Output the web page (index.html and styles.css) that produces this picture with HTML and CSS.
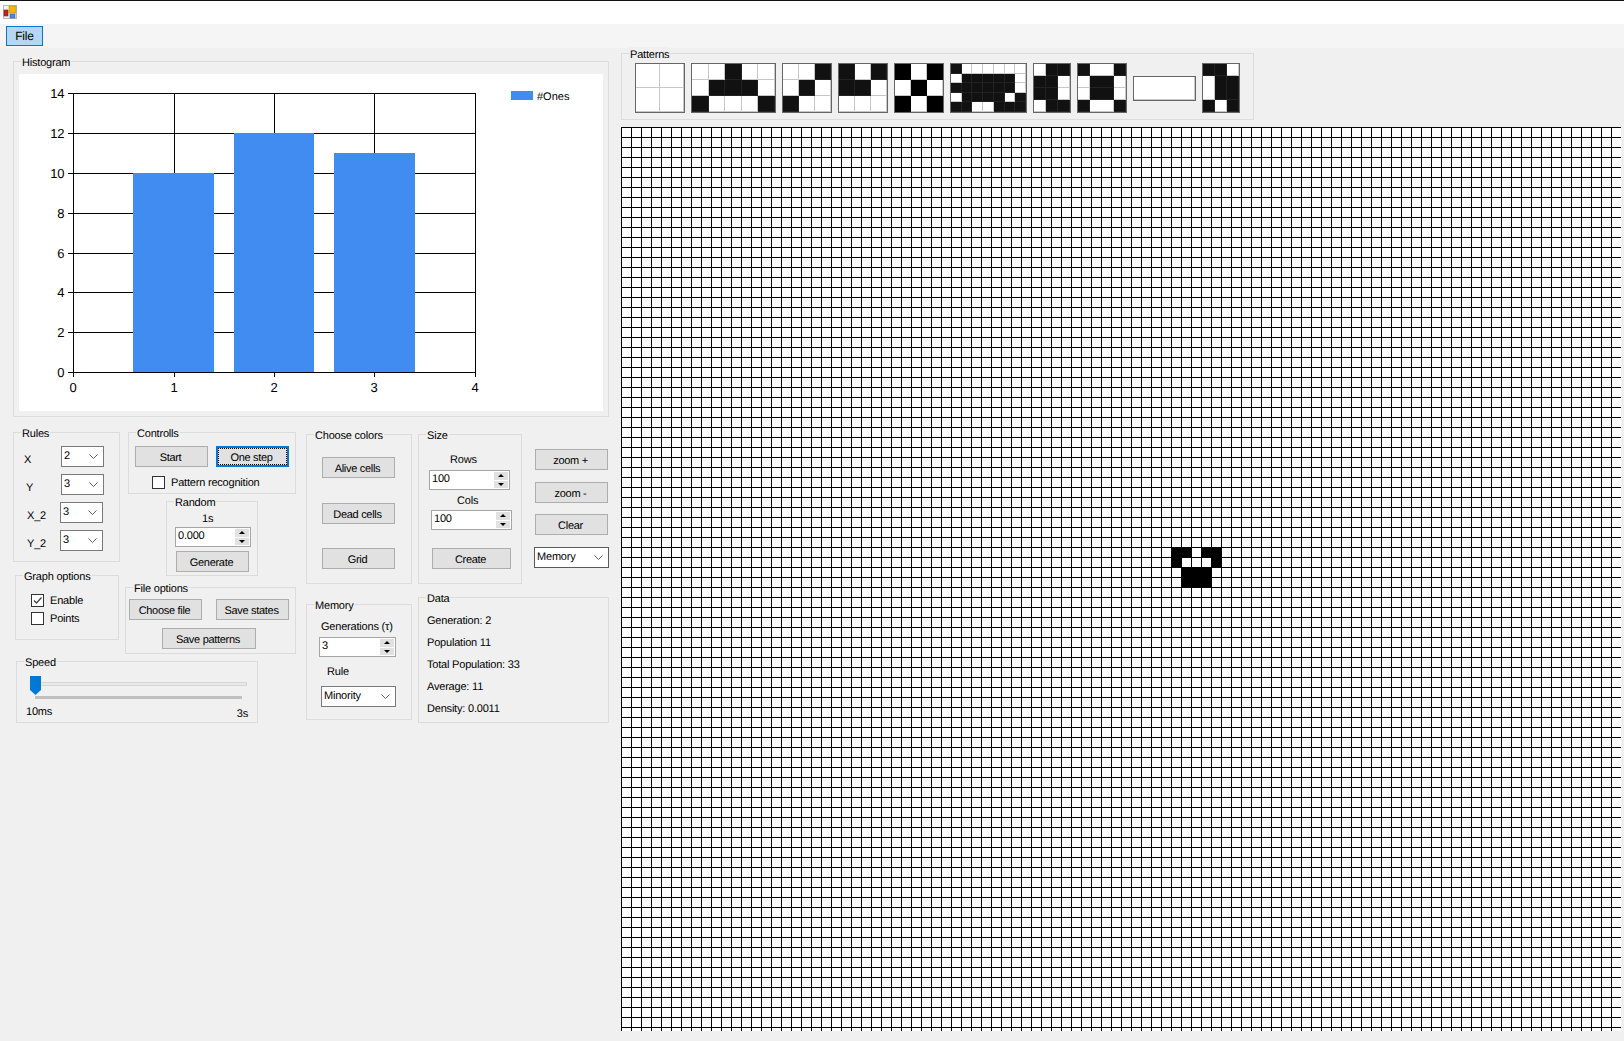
FILE: index.html
```html
<!DOCTYPE html>
<html>

<head>
  <title>Cellular Automata</title>
  <link rel="stylesheet" href="styles.css">
</head>

<body>
  <!-- Window title bar, only the icon shows -->
  <div class="titlebar">
    <svg class="app-icon" width="14" height="14" viewBox="0 0 14 14">
      <rect x="0" y="0" width="14" height="14" fill="#bbb" />
      <rect x="1" y="1" width="12" height="12" fill="#f4f4f4" />
      <rect x="6" y="1" width="7" height="7" fill="#f2b705" stroke="#c88a10" stroke-width="0.6" />
      <rect x="1" y="5" width="4" height="6" fill="#c0231c" stroke="#8a1a14" stroke-width="0.6" />
      <rect x="7" y="9" width="5" height="4" fill="#4f86d8" stroke="#3465ac" stroke-width="0.6" />
    </svg>
  </div>

  <!-- Menu strip -->
  <div class="menubar">
    <div class="menu-file">File</div>
  </div>

  <div class="main">
    <!-- Left side with the histogram and all the controls -->
    <div class="left">
      <div class="group histogram">
        <div class="group-title">Histogram</div>
        <svg class="chart" width="584" height="337" viewBox="19 74 584 337">
          <g class="chart-lines">
            <path d="M73 93.5H475M73 133.5H475M73 173.5H475M73 213.5H475M73 253.5H475M73 292.5H475M73 332.5H475M73 372.5H475" />
            <path d="M73.5 93V373M174.5 93V373M274.5 93V373M374.5 93V373M475.5 93V373" />
            <path d="M68 93.5H73M68 133.5H73M68 173.5H73M68 213.5H73M68 253.5H73M68 292.5H73M68 332.5H73M68 372.5H73" />
            <path d="M73.5 372V377M174.5 372V377M274.5 372V377M374.5 372V377M475.5 372V377" />
          </g>
          <g class="chart-bars">
            <rect x="133" y="173" width="81" height="199" />
            <rect x="234" y="133" width="80" height="239" />
            <rect x="334" y="153" width="81" height="219" />
            <rect x="511" y="91" width="22" height="9" />
          </g>
          <g class="chart-y">
            <text x="64" y="98">14</text>
            <text x="64" y="138">12</text>
            <text x="64" y="178">10</text>
            <text x="64" y="218">8</text>
            <text x="64" y="258">6</text>
            <text x="64" y="297">4</text>
            <text x="64" y="337">2</text>
            <text x="64" y="377">0</text>
          </g>
          <g class="chart-x">
            <text x="73" y="392">0</text>
            <text x="174" y="392">1</text>
            <text x="274" y="392">2</text>
            <text x="374" y="392">3</text>
            <text x="475" y="392">4</text>
          </g>
          <text class="chart-legend" x="537" y="100">#Ones</text>
        </svg>
      </div>

      <div class="tools">
        <div class="tools-a">
          <div class="tools-top">
            <div class="col-rules">
              <!-- Rules -->
              <div class="group rules">
                <div class="group-title">Rules</div>
                <div class="rule-rows">
                  <div class="rule-row">
                    <span class="rule-label lab-x">X</span>
                    <div class="combo combo-rule"><span>2</span><svg width="9" height="5" viewBox="0 0 9 5"><path d="M0.5 0.5L4.5 4.5L8.5 0.5" /></svg></div>
                  </div>
                  <div class="rule-row">
                    <span class="rule-label lab-y">Y</span>
                    <div class="combo combo-rule"><span>3</span><svg width="9" height="5" viewBox="0 0 9 5"><path d="M0.5 0.5L4.5 4.5L8.5 0.5" /></svg></div>
                  </div>
                  <div class="rule-row">
                    <span class="rule-label lab-x2">X_2</span>
                    <div class="combo combo-rule combo-shift"><span>3</span><svg width="9" height="5" viewBox="0 0 9 5"><path d="M0.5 0.5L4.5 4.5L8.5 0.5" /></svg></div>
                  </div>
                  <div class="rule-row">
                    <span class="rule-label lab-x2">Y_2</span>
                    <div class="combo combo-rule combo-shift"><span>3</span><svg width="9" height="5" viewBox="0 0 9 5"><path d="M0.5 0.5L4.5 4.5L8.5 0.5" /></svg></div>
                  </div>
                </div>
              </div>

              <!-- Graph options -->
              <div class="group graph-options">
                <div class="group-title">Graph options</div>
                <label class="check check-enable">
                  <span class="box"><svg width="11" height="11" viewBox="0 0 11 11"><path d="M2 5.5L4.5 8L9.5 2.5" /></svg></span>Enable
                </label>
                <label class="check check-points"><span class="box"></span>Points</label>
              </div>
            </div>

            <div class="col-controls">
              <!-- Start and step -->
              <div class="group controlls">
                <div class="group-title">Controlls</div>
                <div class="btn-row controlls-row">
                  <div class="btn">Start</div>
                  <div class="btn btn-focus">One step</div>
                </div>
                <label class="check check-pattern"><span class="box"></span>Pattern recognition</label>
              </div>

              <!-- Random -->
              <div class="group random">
                <div class="group-title">Random</div>
                <div class="random-time">1s</div>
                <div class="numeric numeric-random"><span>0.000</span>
                  <div class="spin"><i class="up"></i><i class="down"></i></div>
                </div>
                <div class="btn btn-generate">Generate</div>
              </div>

              <!-- File options -->
              <div class="group file-options">
                <div class="group-title">File options</div>
                <div class="btn-row file-row">
                  <div class="btn">Choose file</div>
                  <div class="btn">Save states</div>
                </div>
                <div class="btn btn-patterns">Save patterns</div>
              </div>
            </div>
          </div>

          <!-- Speed slider -->
          <div class="group speed">
            <div class="group-title">Speed</div>
            <div class="slider">
              <div class="slider-track"></div>
              <svg class="slider-thumb" width="11" height="19" viewBox="0 0 11 19"><path d="M0 0H11V14L5.5 19L0 14Z" /></svg>
            </div>
            <div class="slider-ticks"></div>
            <div class="slider-labels">
              <span>10ms</span>
              <span class="slider-max">3s</span>
            </div>
          </div>
        </div>

        <div class="tools-b">
          <!-- Choose colors -->
          <div class="group colors">
            <div class="group-title">Choose colors</div>
            <div class="btn btn-alive">Alive cells</div>
            <div class="btn btn-dead">Dead cells</div>
            <div class="btn btn-grid">Grid</div>
          </div>

          <!-- Memory -->
          <div class="group memory">
            <div class="group-title">Memory</div>
            <div class="memory-gen">Generations (τ)</div>
            <div class="numeric numeric-gen"><span>3</span>
              <div class="spin"><i class="up"></i><i class="down"></i></div>
            </div>
            <div class="memory-rule">Rule</div>
            <div class="combo combo-minority"><span>Minority</span><svg width="9" height="5" viewBox="0 0 9 5"><path d="M0.5 0.5L4.5 4.5L8.5 0.5" /></svg></div>
          </div>
        </div>

        <div class="tools-c">
          <div class="size-row">
            <!-- Size -->
            <div class="group size">
              <div class="group-title">Size</div>
              <div class="size-rows">Rows</div>
              <div class="numeric numeric-rows"><span>100</span>
                <div class="spin"><i class="up"></i><i class="down"></i></div>
              </div>
              <div class="size-cols">Cols</div>
              <div class="numeric numeric-cols"><span>100</span>
                <div class="spin"><i class="up"></i><i class="down"></i></div>
              </div>
              <div class="btn btn-create">Create</div>
            </div>

            <!-- Zoom buttons -->
            <div class="zoom-col">
              <div class="btn">zoom +</div>
              <div class="btn btn-zoom-out">zoom -</div>
              <div class="btn btn-clear">Clear</div>
              <div class="combo combo-memory"><span>Memory</span><svg width="9" height="5" viewBox="0 0 9 5"><path d="M0.5 0.5L4.5 4.5L8.5 0.5" /></svg></div>
            </div>
          </div>

          <!-- Data -->
          <div class="group data">
            <div class="group-title">Data</div>
            <div class="data-lines">
              <div>Generation: 2</div>
              <div>Population 11</div>
              <div>Total Population: 33</div>
              <div>Average: 11</div>
              <div>Density: 0.0011</div>
            </div>
          </div>
        </div>
      </div>
    </div>

    <!-- Right side with the patterns and the board -->
    <div class="right">
      <div class="group patterns">
        <div class="group-title">Patterns</div>
        <div class="pattern-row">
          <div class="pat pat-a"><i></i><i></i><i></i><i></i></div>
          <div class="pat pat-b">
            <i></i><i></i><i class="on"></i><i></i><i></i>
            <i></i><i class="on"></i><i class="on"></i><i class="on"></i><i></i>
            <i class="on"></i><i></i><i></i><i></i><i class="on"></i>
          </div>
          <div class="pat pat-c">
            <i></i><i></i><i class="on"></i>
            <i></i><i class="on"></i><i></i>
            <i class="on"></i><i></i><i></i>
          </div>
          <div class="pat pat-c">
            <i class="on"></i><i></i><i class="on"></i>
            <i class="on"></i><i class="on"></i><i></i>
            <i></i><i></i><i></i>
          </div>
          <div class="pat pat-c pat-solid">
            <i class="on"></i><i></i><i class="on"></i>
            <i></i><i class="on"></i><i></i>
            <i class="on"></i><i></i><i class="on"></i>
          </div>
          <div class="pat pat-d">
            <i class="on"></i><i></i><i></i><i></i><i></i><i></i><i></i>
            <i></i><i class="on"></i><i class="on"></i><i class="on"></i><i class="on"></i><i class="on"></i><i></i>
            <i class="on"></i><i class="on"></i><i class="on"></i><i class="on"></i><i class="on"></i><i class="on"></i><i></i>
            <i></i><i class="on"></i><i class="on"></i><i class="on"></i><i class="on"></i><i></i><i class="on"></i>
            <i class="on"></i><i class="on"></i><i></i><i></i><i class="on"></i><i class="on"></i><i class="on"></i>
          </div>
          <div class="pat pat-e">
            <i></i><i class="on"></i><i class="on"></i>
            <i class="on"></i><i class="on"></i><i></i>
            <i class="on"></i><i class="on"></i><i></i>
            <i></i><i class="on"></i><i class="on"></i>
          </div>
          <div class="pat pat-f">
            <i class="on"></i><i></i><i class="on"></i>
            <i></i><i class="on"></i><i></i>
            <i></i><i class="on"></i><i></i>
            <i class="on"></i><i></i><i class="on"></i>
          </div>
          <div class="pat pat-g"><i></i></div>
          <div class="pat pat-h">
            <i class="on"></i><i class="on"></i><i></i>
            <i></i><i class="on"></i><i class="on"></i>
            <i class="on"></i><i></i><i class="on"></i>
          </div>
        </div>
      </div>

      <!-- Board: 10px cells -->
      <svg class="board" width="1000" height="904" viewBox="0 0 1000 904">
        <defs>
          <pattern id="cell" width="10" height="10" patternUnits="userSpaceOnUse">
            <rect width="10" height="10" fill="#fff" />
            <rect width="10" height="1" fill="#000" />
            <rect width="1" height="10" fill="#000" />
          </pattern>
        </defs>
        <rect width="1000" height="904" fill="url(#cell)" />
        <rect x="550" y="420" width="21" height="11" />
        <rect x="580" y="420" width="21" height="11" />
        <rect x="550" y="430" width="11" height="11" />
        <rect x="590" y="430" width="11" height="11" />
        <rect x="560" y="440" width="31" height="21" />
      </svg>
    </div>
  </div>
</body>

</html>
```

FILE: styles.css
```css
/* Reset and window background */
* {
  box-sizing: border-box;
}

body {
  margin: 0;
  height: 1041px;
  overflow: hidden;
  background: #f0f0f0;
  color: #000;
  font-family: "Liberation Sans", Arial, sans-serif;
  font-size: 11px;
  line-height: 13px;
  letter-spacing: -0.2px;
  text-rendering: geometricPrecision;
}

/* Title bar and menu */
.titlebar {
  height: 24px;
  background: #fff;
  border-top: 1px solid #111;
  padding: 4px 0 0 3px;
}

.app-icon {
  display: block;
}

.menubar {
  height: 24px;
  background: #f5f5f5;
  padding: 2px 0 0 6px;
}

.menu-file {
  width: 37px;
  height: 20px;
  background: #b5d7f3;
  border: 1px solid #0078d7;
  font-size: 12px;
  line-height: 19px;
  text-align: center;
}

.main {
  display: flex;
}

.left {
  width: 621px;
  padding-left: 13px;
}

.right {
  flex: 1;
}

/* Group box with its title sitting on the border */
.group {
  border: 1px solid #dcdcdc;
}

.group-title {
  width: fit-content;
  height: 13px;
  margin: -7px 0 0 7px;
  padding: 0 1px;
  background: #f0f0f0;
  line-height: 17px;
}

/* Histogram */
.histogram {
  width: 596px;
  height: 356px;
  margin-top: 13px;
}

.chart {
  display: block;
  margin: 6px 0 0 5px;
  background: #fff;
}

.chart-lines path {
  fill: none;
  stroke: #000;
  stroke-width: 1;
  shape-rendering: crispEdges;
}

.chart-bars rect {
  fill: #418cf0;
}

.chart text {
  font-size: 13px;
  letter-spacing: -0.4px;
}

.chart-y text {
  text-anchor: end;
}

.chart-x text {
  text-anchor: middle;
}

.chart .chart-legend {
  font-size: 11px;
  letter-spacing: 0;
}

/* Lower tools */
.tools {
  display: flex;
  margin-top: 15px;
}

.tools-a {
  width: 283px;
}

.tools-b {
  width: 106px;
  margin-left: 10px;
}

.tools-c {
  width: 191px;
  margin-left: 6px;
}

.tools-top {
  display: flex;
}

.col-rules {
  width: 112px;
}

.col-controls {
  width: 171px;
}

/* Buttons */
.btn {
  width: 73px;
  height: 21px;
  background: #e1e1e1;
  border: 1px solid #adadad;
  padding-right: 2px;
  line-height: 22px;
  letter-spacing: -0.3px;
  text-align: center;
}

.btn-focus {
  border: 2px solid #0078d7;
  outline: 1px dotted #000;
  outline-offset: -3px;
  line-height: 20px;
}

.btn-row {
  display: flex;
}

/* Combo boxes */
.combo {
  display: flex;
  align-items: center;
  justify-content: space-between;
  height: 21px;
  background: #fff;
  border: 1px solid #7a7a7a;
  padding: 0 5px 0 2px;
}

.combo svg {
  fill: none;
  stroke: #606060;
}

/* Numeric up down */
.numeric {
  display: flex;
  align-items: center;
  justify-content: space-between;
  height: 20px;
  background: #fff;
  border: 1px solid #a5a5a5;
  padding: 0 1px 2px 2px;
}

.spin {
  display: flex;
  flex-direction: column;
  gap: 1px;
  width: 14px;
  height: 16px;
  margin-top: 2px;
}

.spin i {
  display: flex;
  align-items: center;
  justify-content: center;
  height: 7px;
  background: #e1e1e1;
  flex: 1;
}

.spin i::before {
  content: "";
  border-left: 3px solid transparent;
  border-right: 3px solid transparent;
}

.spin .up::before {
  border-bottom: 3px solid #000;
}

.spin .down::before {
  border-top: 3px solid #000;
}

/* Check boxes */
.check {
  display: flex;
  align-items: flex-start;
  gap: 6px;
  height: 13px;
  line-height: 15px;
}

.box {
  width: 13px;
  height: 13px;
  background: #fff;
  border: 1px solid #333;
}

.box svg {
  display: block;
  fill: none;
  stroke: #444;
  stroke-width: 1.3;
}

/* Rules */
.rules {
  width: 107px;
  height: 130px;
}

.rule-rows {
  display: flex;
  flex-direction: column;
  gap: 7px;
  margin-top: 7px;
}

.rule-row {
  display: flex;
  align-items: center;
}

.rule-label {
  padding-top: 7px;
}

.lab-x {
  margin-left: 10px;
}

.lab-y {
  margin-left: 12px;
}

.lab-x2 {
  margin-left: 13px;
}

.combo-rule {
  width: 43px;
  margin-left: auto;
  margin-right: 15px;
}

.combo-shift {
  margin-right: 16px;
}

/* Graph options */
.graph-options {
  width: 104px;
  height: 65px;
  margin: 13px 0 0 2px;
}

.check-enable {
  margin: 12px 0 0 15px;
}

.check-points {
  margin: 5px 0 0 15px;
}

/* Controlls */
.controlls {
  width: 168px;
  height: 62px;
  margin-left: 3px;
}

.controlls-row {
  gap: 8px;
  margin: 7px 0 0 6px;
}

.check-pattern {
  margin: 9px 0 0 23px;
}

/* Random */
.random {
  width: 92px;
  height: 75px;
  margin: 7px 0 0 41px;
}

.random-time {
  margin: 5px 0 0 35px;
}

.numeric-random {
  width: 76px;
  margin: 1px 0 0 8px;
}

.btn-generate {
  margin: 4px 0 0 9px;
}

/* File options */
.file-options {
  width: 171px;
  height: 67px;
  margin-top: 11px;
}

.file-row {
  gap: 14px;
  margin: 5px 0 0 3px;
}

.btn-patterns {
  width: 94px;
  margin: 8px 0 0 36px;
}

/* Speed */
.speed {
  width: 242px;
  height: 62px;
  margin: 7px 0 0 3px;
}

.slider {
  display: flow-root;
  position: relative;
  height: 19px;
  margin: 8px 0 0 13px;
}

.slider-track {
  width: 212px;
  height: 4px;
  margin: 6px 0 0 5px;
  background: #e7eaea;
  border: 1px solid #d6d6d6;
}

/* thumb lies over the track */
.slider-thumb {
  position: absolute;
  top: 0;
  left: 0;
  fill: #0078d7;
}

.slider-ticks {
  width: 207px;
  height: 3px;
  margin: 1px 0 0 18px;
  background: #c0c0c0;
}

.slider-labels {
  display: flex;
  justify-content: space-between;
  width: 222px;
  margin: 7px 0 0 9px;
}

.slider-max {
  padding-top: 2px;
}

/* Choose colors */
.colors {
  height: 150px;
  margin-top: 2px;
}

.colors .btn {
  margin-left: 15px;
}

.btn-alive {
  margin-top: 16px;
}

.btn-dead {
  margin-top: 25px;
}

.btn-grid {
  margin-top: 24px;
}

/* Memory */
.memory {
  height: 116px;
  margin-top: 20px;
}

.memory-gen {
  margin: 10px 0 0 14px;
}

.numeric-gen {
  width: 77px;
  margin: 3px 0 0 12px;
}

.memory-rule {
  margin: 9px 0 0 20px;
}

.combo-minority {
  width: 75px;
  margin: 7px 0 0 14px;
}

/* Size */
.size-row {
  display: flex;
  margin-top: 2px;
}

.size {
  width: 104px;
  height: 150px;
}

.size-rows {
  margin: 13px 0 0 31px;
}

.numeric-rows {
  width: 81px;
  margin: 3px 0 0 10px;
}

.size-cols {
  margin: 5px 0 0 38px;
}

.numeric-cols {
  width: 81px;
  margin: 2px 0 0 12px;
}

.btn-create {
  width: 79px;
  margin: 18px 0 0 13px;
}

/* Zoom column */
.zoom-col {
  margin: 15px 0 0 12px;
}

.zoom-col .btn {
  margin-left: 1px;
}

.btn-zoom-out {
  margin-top: 12px;
}

.btn-clear {
  margin-top: 11px;
}

.combo-memory {
  width: 75px;
  margin-top: 12px;
  border-color: #5a5a5a;
}

/* Data */
.data {
  height: 126px;
  margin-top: 13px;
}

.data-lines {
  display: flex;
  flex-direction: column;
  gap: 9px;
  margin: 11px 0 0 8px;
}

/* Patterns */
.patterns {
  width: 633px;
  height: 67px;
  margin-top: 5px;
}

.pattern-row {
  display: flex;
  align-items: center;
  gap: 6px;
  margin: 3px 0 0 13px;
}

.pat {
  display: grid;
  height: 50px;
  background: #fff;
  border: 1px solid #666;
}

.pat i {
  border-right: 1px solid #c8c8c8;
  border-bottom: 1px solid #c8c8c8;
}

.pat .on {
  background: #111;
  border-color: #222;
}

.pat-solid .on {
  background: #000;
  border-color: #000;
}

.pat-a {
  width: 50px;
  grid-template: repeat(2, 1fr) / repeat(2, 1fr);
}

.pat-b {
  width: 85px;
  grid-template: repeat(3, 1fr) / repeat(5, 1fr);
}

.pat-c {
  width: 50px;
  grid-template: repeat(3, 1fr) / repeat(3, 1fr);
}

.pat-d {
  width: 77px;
  grid-template: repeat(5, 1fr) / repeat(7, 1fr);
}

.pat-e {
  width: 38px;
  grid-template: repeat(4, 1fr) / repeat(3, 1fr);
}

.pat-f {
  width: 50px;
  grid-template: repeat(4, 1fr) / 1fr 2fr 1fr;
}

.pat-g {
  width: 63px;
  height: 25px;
  grid-template: 1fr / 1fr;
}

.pat-h {
  width: 38px;
  grid-template: 1fr 2fr 1fr / repeat(3, 1fr);
}

/* Board */
.board {
  display: block;
  margin-top: 7px;
}
```
